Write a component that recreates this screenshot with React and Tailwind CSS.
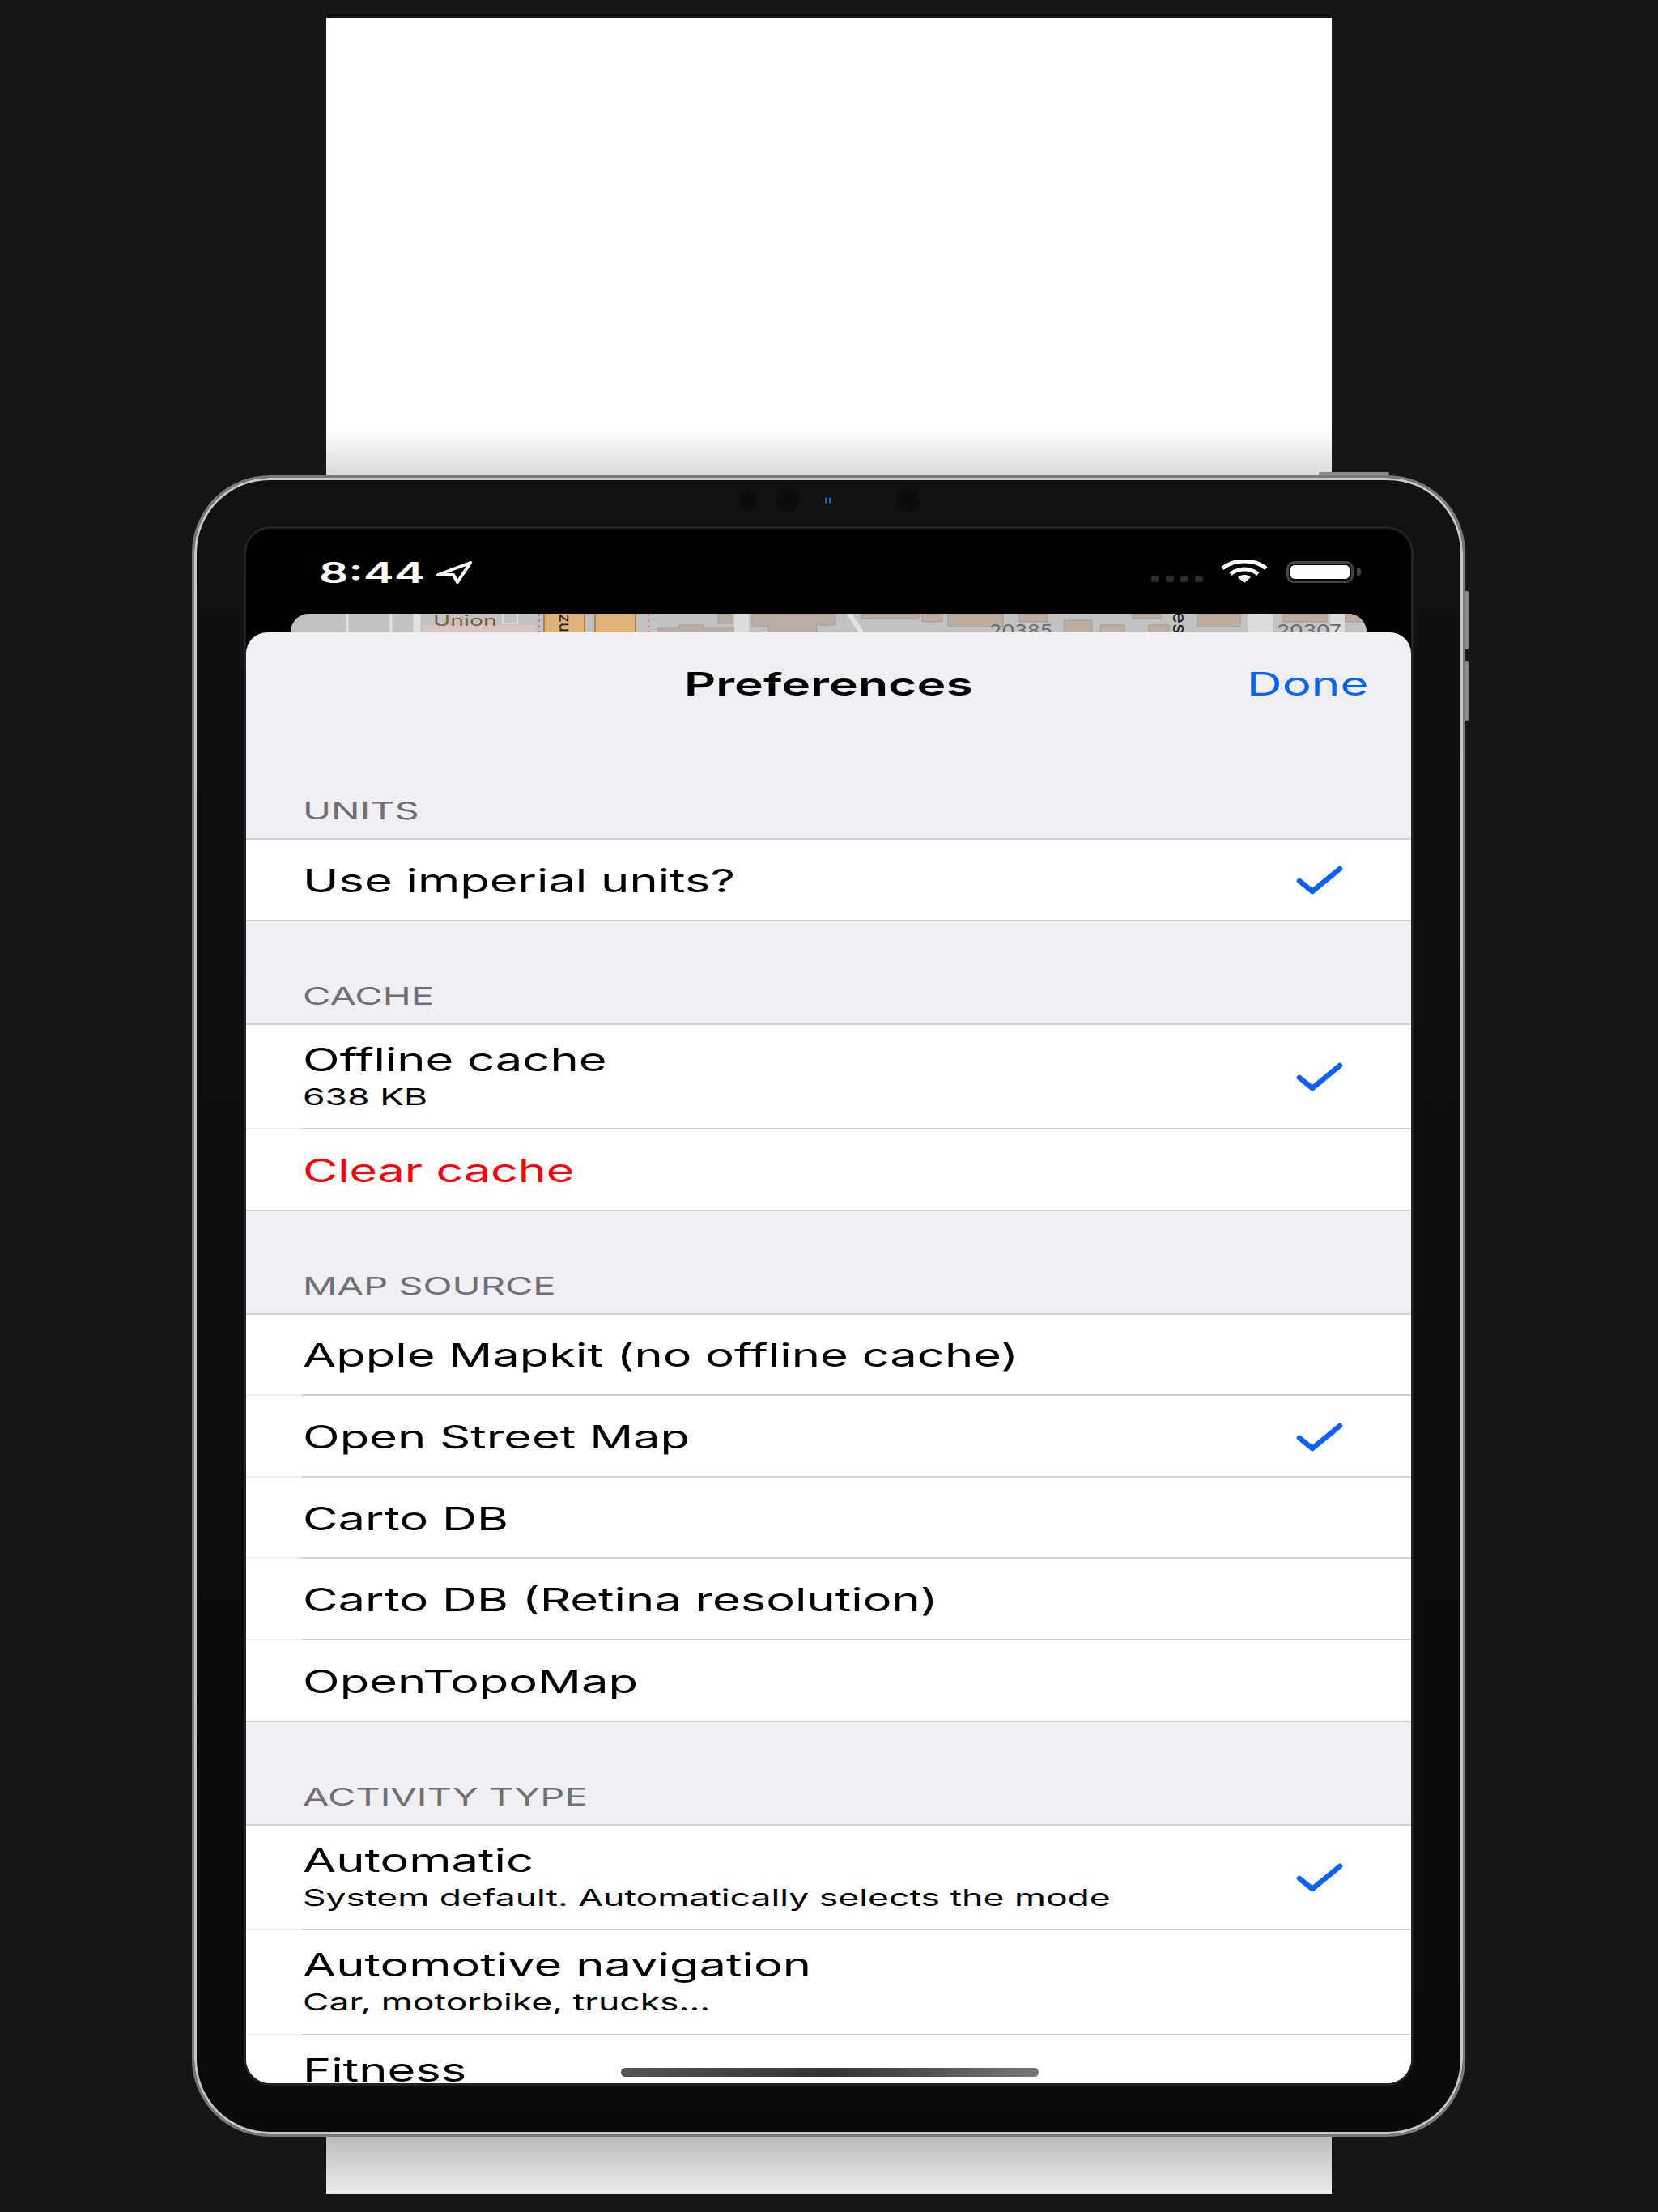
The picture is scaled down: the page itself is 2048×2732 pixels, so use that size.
import React from 'react';

const Check = () => (
  <svg width="58" height="38" viewBox="0 0 58 38" fill="none" className="absolute right-[84px] top-1/2 -translate-y-1/2 mt-[1px]">
    <path d="M4 20 L20 33 L54 5" stroke="#0a62fb" strokeWidth="6.5" strokeLinecap="round" strokeLinejoin="round" />
  </svg>
);

const Line = () => <div className="h-[2px] bg-[#d2d2d6]" />;
const Inset = () => <div className="h-[2px] ml-[69px] bg-[#d2d2d6]" />;

const SectionHeader = ({ title }) => (
  <div className="h-[126px] flex items-end pl-[70px] pb-[16px]">
    <span className="block origin-left scale-x-[1.57] text-[30px] leading-[36px] text-[#6f6f75]">{title}</span>
  </div>
);

const Row = ({ title, subtitle, checked, red }) => (
  <div className={subtitle ? 'relative h-[127.5px] bg-white flex flex-col justify-center gap-[7px] pl-[70px] pb-[3px]' : 'relative h-[98.6px] bg-white flex flex-col justify-center pl-[70px] pt-[2px]'}>
    <span className={red ? 'block origin-left scale-x-[1.515] text-[39px] leading-[47px] text-[#fb0007]' : 'block origin-left scale-x-[1.53] text-[39px] leading-[47px] text-black'}>{title}</span>
    {subtitle && <span className="block origin-left scale-x-[1.59] text-[28px] leading-[32px] text-black">{subtitle}</span>}
    {checked && <Check />}
  </div>
);

const MapStrip = () => (
  <div className="h-[23px] mx-[55px] rounded-t-[26px] overflow-hidden bg-[#c2c2c2]">
    <svg width="1330" height="23" viewBox="0 0 1330 23" className="block">
      <rect x="0" y="0" width="1330" height="23" fill="#c2c2c2" />
      <path d="M70 0V23M124 0V23" stroke="#e2e2e2" strokeWidth="3" fill="none" />
      <rect x="164" y="14" width="138" height="9" fill="#dcc5c5" />
      <path d="M156 0V23" stroke="#e8dede" strokeWidth="9" />
      <path d="M262 0V12H280V0" stroke="#dcdcdc" strokeWidth="2" fill="none" />
      <path d="M307 0V23M442 0V23" stroke="#f26d6d" strokeWidth="2" strokeDasharray="3 4" />
      <rect x="313" y="0" width="50" height="23" fill="#dfb277" />
      <rect x="376" y="0" width="50" height="23" fill="#dfb277" />
      <path d="M313 0V23M363 0V23M376 0V23M426 0V23" stroke="#a98649" strokeWidth="2" />
      <text x="176" y="15" fontFamily="Inter, sans-serif" fontSize="17" fill="#7d5f36" textLength="79" lengthAdjust="spacingAndGlyphs">Union</text>
      <text x="0" y="0" transform="translate(332 0) rotate(90)" fontFamily="Inter, sans-serif" fontSize="20" fill="#222">zu</text>
      <path d="M454 23V18H480V14H510V18H548V23Z" fill="#b8aea5" stroke="#a59a8f" />
      <rect x="528" y="0" width="17" height="12" fill="#b8aea5" stroke="#a59a8f" />
      <rect x="548" y="0" width="18" height="23" fill="#dcdcdc" />
      <path d="M570 0H673V14H650V23H590V16H570Z" fill="#b8aea5" stroke="#a59a8f" />
      <path d="M690 0L705 23" stroke="#e4e4e4" strokeWidth="6" />
      <path d="M705 0H776V6H705Z M780 0H805V10H780Z M812 0H880V16H812Z M900 0H935V10H900Z M955 8H990V23H955Z M1000 14H1030V23H1000Z M1040 0H1075V6H1040Z M1060 14H1085V23H1060Z" fill="#bdaea1" stroke="#a59a8f" />
      <text x="0" y="0" transform="translate(1090 -2) rotate(90)" fontFamily="Inter, sans-serif" fontSize="24" fill="#222">es</text>
      <path d="M1120 0H1173V16H1120Z M1226 0H1280V10H1226Z M1302 0H1330V10H1302Z" fill="#bdaea1" stroke="#a59a8f" />
      <rect x="1182" y="0" width="31" height="23" fill="#dcdcdc" />
      <rect x="1284" y="0" width="18" height="23" fill="#dcdcdc" />
      <text x="863" y="28" fontFamily="Inter, sans-serif" fontSize="20" fill="#6b6b6b" textLength="78" lengthAdjust="spacingAndGlyphs">20385</text>
      <text x="1218" y="28" fontFamily="Inter, sans-serif" fontSize="20" fill="#6b6b6b" textLength="80" lengthAdjust="spacingAndGlyphs">20307</text>
    </svg>
  </div>
);

const StatusBar = () => (
  <div className="h-[105px] flex items-start justify-between pl-[90px] pr-[62px] pt-[36px]">
    <div className="flex items-center gap-[19px] -mt-[2px]">
      <span className="block w-[125px] text-[35px] leading-[40px] font-semibold text-white whitespace-nowrap origin-left scale-x-[1.63]">8:44</span>
      <svg width="46" height="28" viewBox="0 0 46 28" fill="none">
        <path d="M43 2 L3 17 L22 17 L27 26 Z" stroke="#fff" strokeWidth="4" strokeLinejoin="round" />
      </svg>
    </div>
    <div className="flex items-center h-[28px] mt-[3px]">
      <div className="flex gap-[8px] mt-[18px] mr-[21px]">
        <div className="w-[10px] h-[8px] rounded-[3px] bg-[#2c2c2e]" />
        <div className="w-[10px] h-[8px] rounded-[3px] bg-[#2c2c2e]" />
        <div className="w-[10px] h-[8px] rounded-[3px] bg-[#2c2c2e]" />
        <div className="w-[10px] h-[8px] rounded-[3px] bg-[#2c2c2e]" />
      </div>
      <svg width="60" height="28" viewBox="0 0 60 28" fill="none">
        <path d="M3 10 C18 -2 42 -2 57 10" stroke="#fff" strokeWidth="5" />
        <path d="M13 17 C23 9 37 9 47 17" stroke="#fff" strokeWidth="5" />
        <path d="M22 21 L30 28 L38 21 C33 17 27 17 22 21 Z" fill="#fff" />
      </svg>
      <div className="ml-[22px] w-[83px] h-[27px] rounded-[9px] border-[3px] border-[#444] p-[2px]">
        <div className="w-full h-full rounded-[5px] bg-white" />
      </div>
      <div className="ml-[4px] w-[5px] h-[10px] rounded-r-[4px] bg-[#444]" />
    </div>
  </div>
);

const Sheet = () => (
  <div className="flex-1 min-h-0 rounded-t-[26px] overflow-hidden bg-[#efeff4]">
    <div className="relative h-[128px] flex items-start justify-center pt-[40px]">
      <span className="block text-[39px] leading-[48px] font-semibold text-black scale-x-[1.56]">Preferences</span>
      <span className="absolute left-[1236px] top-[40px] block origin-left scale-x-[1.55] text-[39px] leading-[48px] text-[#0a62fb]">Done</span>
    </div>
    <SectionHeader title="UNITS" />
    <Line />
    <Row title="Use imperial units?" checked />
    <Line />

    <SectionHeader title="CACHE" />
    <Line />
    <Row title="Offline cache" subtitle="638 KB" checked />
    <Inset />
    <Row title="Clear cache" red />
    <Line />

    <SectionHeader title="MAP SOURCE" />
    <Line />
    <Row title="Apple Mapkit (no offline cache)" />
    <Inset />
    <Row title="Open Street Map" checked />
    <Inset />
    <Row title="Carto DB" />
    <Inset />
    <Row title="Carto DB (Retina resolution)" />
    <Inset />
    <Row title="OpenTopoMap" />
    <Line />

    <SectionHeader title="ACTIVITY TYPE" />
    <Line />
    <Row title="Automatic" subtitle="System default. Automatically selects the mode" checked />
    <Inset />
    <Row title="Automotive navigation" subtitle="Car, motorbike, trucks..." />
    <Inset />
    <Row title="Fitness" subtitle="Walking, running, cycling" />
  </div>
);

const Device = () => (
  <div className="absolute left-[237px] top-[587px] w-[1573px] h-[2052px]">
    {/* hardware buttons */}
    <div className="absolute left-[1392px] -top-[4px] w-[87px] h-[5px] rounded-t-[2px] bg-[#8a8a8a]" />
    <div className="absolute -right-[4px] top-[143px] w-[5px] h-[72px] rounded-r-[2px] bg-[#8a8a8a]" />
    <div className="absolute -right-[4px] top-[230px] w-[5px] h-[73px] rounded-r-[2px] bg-[#8a8a8a]" />

    <div className="relative w-full h-full rounded-[96px] border-[3px] border-[#777a77] shadow-[inset_0_0_0_3px_#c6c8c6] bg-gradient-to-b from-[#111111] to-[#0a0a0a] px-[64px] py-[63px]">
      {/* camera */}
      <div className="absolute left-[673px] top-[14px] flex items-center h-[28px]">
        <div className="w-[22px] h-[22px] rounded-full bg-[#0c0c0c]" />
        <div className="ml-[24px] w-[28px] h-[28px] rounded-full bg-[#0c0c0c]" />
        <div className="ml-[31px] w-[10px] h-[10px] rounded-full bg-[#0a0a0a] flex items-center justify-center gap-[2px]">
          <div className="w-[3px] h-[8px] rounded-full bg-[#1d5fb0]" />
          <div className="w-[3px] h-[8px] rounded-full bg-[#1d5fb0]" />
        </div>
        <div className="ml-[80px] w-[28px] h-[28px] rounded-full bg-[#0c0c0c]" />
      </div>
      <div className="relative w-[1439px] h-[1920px] rounded-[30px] overflow-hidden bg-black flex flex-col ring-[3px] ring-[#222222]">
        <StatusBar />
        <MapStrip />
        <Sheet />
        <div className="absolute left-[463px] bottom-[8px] w-[516px] h-[11px] rounded-full bg-gradient-to-r from-[#555555] via-[#333333] to-[#777777]" />
      </div>
    </div>
  </div>
);

export default function App() {
  return (
    <div className="relative w-[2048px] h-[2732px] bg-[#161616] pt-[22px] pb-[22px] font-['Inter',sans-serif]">
      <div className="mx-auto w-[1242px] h-full flex flex-col bg-white">
        <div className="flex-1" />
        <div className="h-[57px] bg-gradient-to-b from-white to-[#dadada]" />
        <div className="h-[2052px]" />
        <div className="h-[71px] bg-gradient-to-b from-[#bbbbbb] to-[#eeeeee]" />
      </div>
      <Device />
    </div>
  );
}
